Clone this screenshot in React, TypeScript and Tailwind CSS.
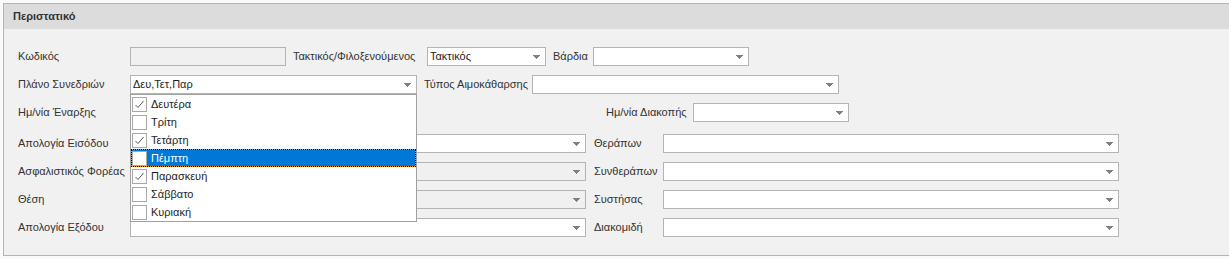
import type { ReactNode } from 'react'

const Arrow = () => (
  <svg width="7" height="4" viewBox="0 0 7 4" shapeRendering="crispEdges" className="shrink-0">
    <rect x="0" y="0" width="7" height="1" fill="#808080" />
    <rect x="1" y="1" width="5" height="1" fill="#808080" />
    <rect x="2" y="2" width="3" height="1" fill="#808080" />
    <rect x="3" y="3" width="1" height="1" fill="#808080" />
  </svg>
)

const Check = () => (
  <svg width="13" height="13" viewBox="0 0 13 13">
    <polyline points="2.5,7 5,9.5 10.5,3" fill="none" stroke="#5a5a5a" strokeWidth="1" />
  </svg>
)

type SelectProps = {
  w: string
  value?: string
  disabled?: boolean
  children?: ReactNode
}

const Select = ({ w, value, disabled, children }: SelectProps) => (
  <div
    className={`relative flex items-center h-[19px] border border-[#b4b4b4] pl-[2px] pr-[5px] shrink-0 ${w} ${disabled ? 'bg-[#f0f0f0]' : 'bg-white'}`}
  >
    <span className="flex-1 truncate text-[#1e1e1e]">{value}</span>
    <Arrow />
    {children}
  </div>
)

const Label = ({ w, ml, children }: { w: string; ml?: string; children: ReactNode }) => (
  <div className={`shrink-0 whitespace-nowrap text-[#333] ${w} ${ml ?? ''}`}>{children}</div>
)

const days = [
  { name: 'Δευτέρα', checked: true },
  { name: 'Τρίτη', checked: false },
  { name: 'Τετάρτη', checked: true },
  { name: 'Πέμπτη', checked: false, active: true },
  { name: 'Παρασκευή', checked: true },
  { name: 'Σάββατο', checked: false },
  { name: 'Κυριακή', checked: false },
]

const DayList = () => (
  <div className="absolute left-[-1px] top-[18px] w-[287px] border border-[#a0a0a0] bg-white z-10">
    {days.map(d => {
      const box = (
        <div className="w-[15px] h-[15px] border border-[#a8a8a8] bg-white flex items-center justify-center shrink-0">
          {d.checked && <Check />}
        </div>
      )
      if (d.active) {
        return (
          <div key={d.name} className="h-[18px] bg-[#f08c28]">
            <div className="h-[18px] flex items-center border border-dotted border-black bg-[#0078d7] bg-clip-padding">
              {box}
              <span className="ml-[4px] text-white">{d.name}</span>
            </div>
          </div>
        )
      }
      return (
        <div key={d.name} className="h-[18px] flex items-center pl-[1px]">
          {box}
          <span className="ml-[4px] text-[#1e1e1e]">{d.name}</span>
        </div>
      )
    })}
  </div>
)

export default function App() {
  return (
    <div
      className="w-[1229px] h-[259px] overflow-hidden bg-[#fafafa] pt-[3px] pl-[3px] text-[11px] leading-none"
      style={{ fontFamily: '"Liberation Sans", Arial, sans-serif' }}
    >
      <div className="h-[253px] border border-r-0 border-[#b4b4b4] bg-[#f1f1f1] flex flex-col">
        <div className="h-[25px] bg-[#dcdcdc] flex items-center pl-[9px] font-bold text-[#333]">
          Περιστατικό
        </div>

        <div className="flex flex-col pl-[14px] pt-[18px]">
          <div className="flex items-center">
            <Label w="w-[112px]">Κωδικός</Label>
            <div className="w-[156px] h-[19px] border border-[#b4b4b4] bg-[#f0f0f0] shrink-0" />
            <Label w="w-[134px]" ml="ml-[7px]">Τακτικός/Φιλοξενούμενος</Label>
            <Select w="w-[119px]" value="Τακτικός" />
            <Label w="w-[40px]" ml="ml-[7px]">Βάρδια</Label>
            <Select w="w-[156px]" />
          </div>

          <div className="flex items-center mt-[9px] relative z-10">
            <Label w="w-[112px]">Πλάνο Συνεδριών</Label>
            <Select w="w-[287px]" value="Δευ,Τετ,Παρ">
              <DayList />
            </Select>
            <Label w="w-[108px]" ml="ml-[7px]">Τύπος Αιμοκάθαρσης</Label>
            <Select w="w-[307px]" />
          </div>

          <div className="flex items-center mt-[9px]">
            <Label w="w-[112px]">Ημ/νία Έναρξης</Label>
            <Select w="w-[156px]" />
            <Label w="w-[87px]" ml="ml-[320px]">Ημ/νία Διακοπής</Label>
            <Select w="w-[156px]" />
          </div>

          <div className="flex items-center mt-[12px]">
            <Label w="w-[112px]">Απολογία Εισόδου</Label>
            <Select w="w-[456px]" />
            <Label w="w-[69px]" ml="ml-[8px]">Θεράπων</Label>
            <Select w="w-[456px]" />
          </div>

          <div className="flex items-center mt-[9px]">
            <Label w="w-[112px]">Ασφαλιστικός Φορέας</Label>
            <Select w="w-[456px]" disabled />
            <Label w="w-[69px]" ml="ml-[8px]">Συνθεράπων</Label>
            <Select w="w-[456px]" />
          </div>

          <div className="flex items-center mt-[9px]">
            <Label w="w-[112px]">Θέση</Label>
            <Select w="w-[456px]" disabled />
            <Label w="w-[69px]" ml="ml-[8px]">Συστήσας</Label>
            <Select w="w-[456px]" />
          </div>

          <div className="flex items-center mt-[9px]">
            <Label w="w-[112px]">Απολογία Εξόδου</Label>
            <Select w="w-[456px]" />
            <Label w="w-[69px]" ml="ml-[8px]">Διακομιδή</Label>
            <Select w="w-[456px]" />
          </div>
        </div>
      </div>
    </div>
  )
}
